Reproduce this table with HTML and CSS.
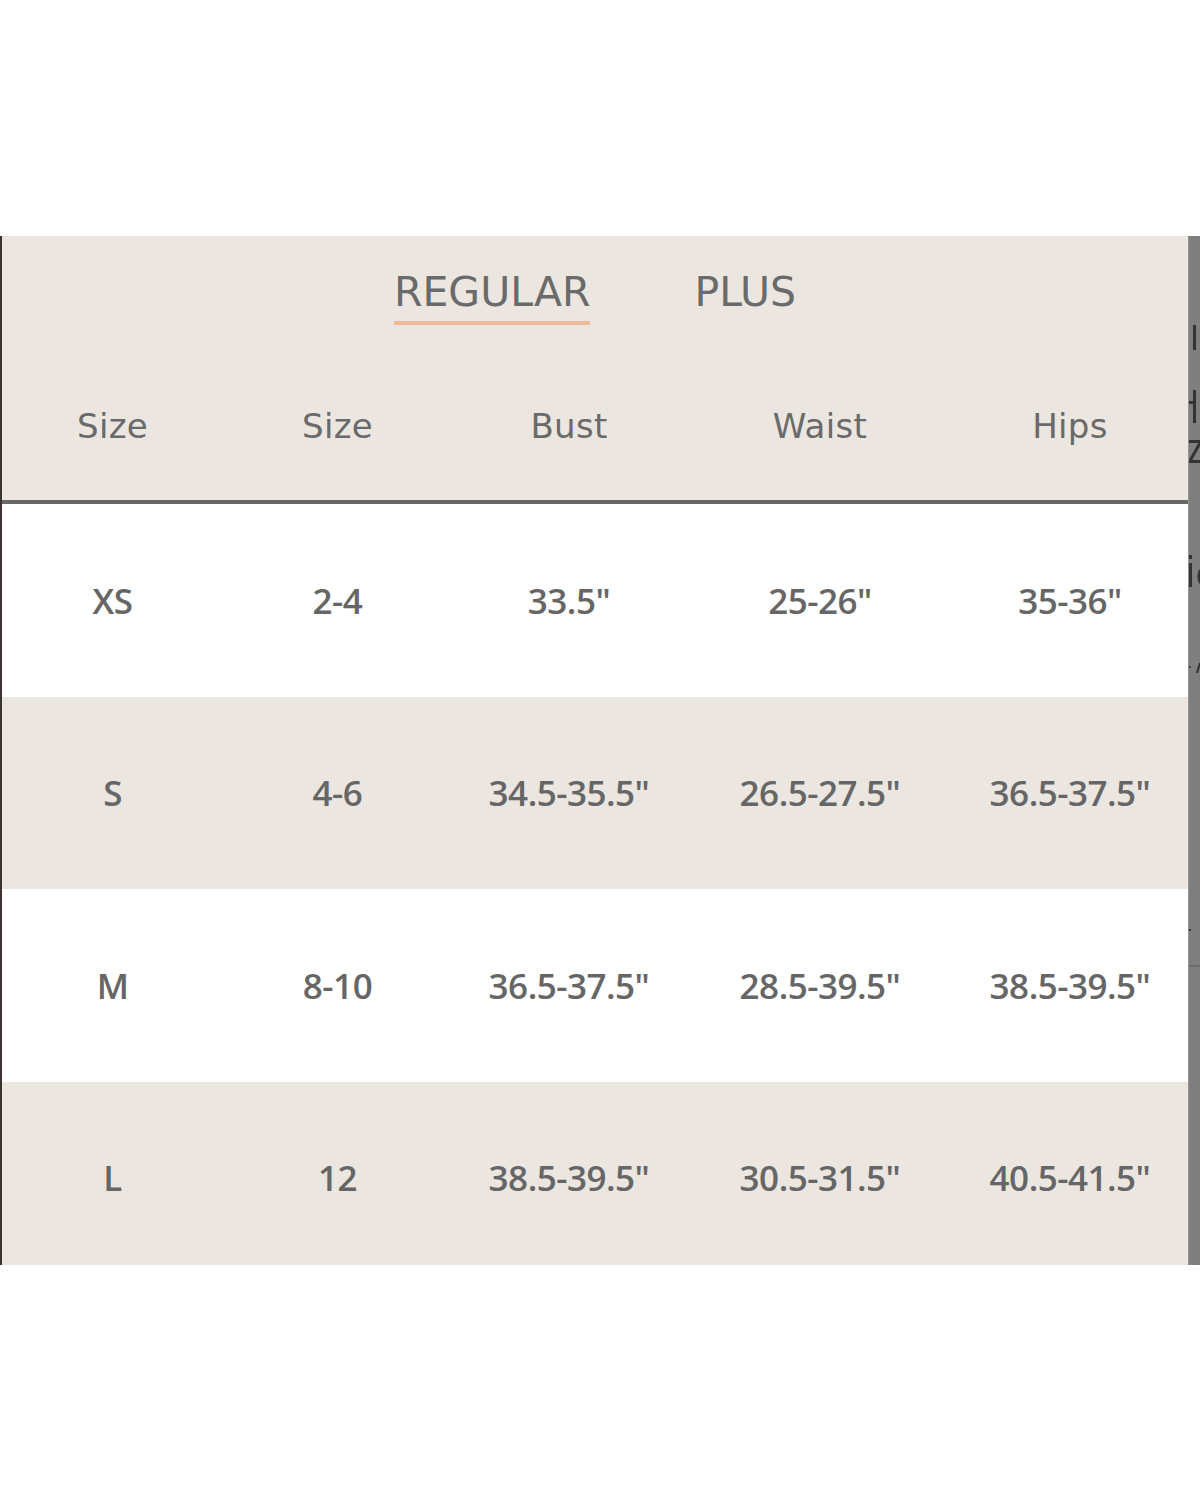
FILE: index.html
```html
<!DOCTYPE html>
<html lang="en">
<head>
<meta charset="utf-8">
<title>Size Chart</title>
<link rel="stylesheet" href="styles.css">
</head>
<body>
<div class="page">
  <div class="frame">
    <div class="panel">
      <div class="tabs">
        <span class="tab active">REGULAR</span>
        <span class="tab">PLUS</span>
      </div>
      <div class="table">
        <div class="row head">
          <div class="cell">Size</div>
          <div class="cell">Size</div>
          <div class="cell">Bust</div>
          <div class="cell">Waist</div>
          <div class="cell">Hips</div>
        </div>
        <div class="row">
          <div class="cell">XS</div>
          <div class="cell">2-4</div>
          <div class="cell">33.5"</div>
          <div class="cell">25-26"</div>
          <div class="cell">35-36"</div>
        </div>
        <div class="row alt">
          <div class="cell">S</div>
          <div class="cell">4-6</div>
          <div class="cell">34.5-35.5"</div>
          <div class="cell">26.5-27.5"</div>
          <div class="cell">36.5-37.5"</div>
        </div>
        <div class="row">
          <div class="cell">M</div>
          <div class="cell">8-10</div>
          <div class="cell">36.5-37.5"</div>
          <div class="cell">28.5-39.5"</div>
          <div class="cell">38.5-39.5"</div>
        </div>
        <div class="row alt">
          <div class="cell">L</div>
          <div class="cell">12</div>
          <div class="cell">38.5-39.5"</div>
          <div class="cell">30.5-31.5"</div>
          <div class="cell">40.5-41.5"</div>
        </div>
      </div>
    </div>
    <div class="strip">
      <svg class="strip-art" width="11" height="1029" viewBox="0 0 11 1029" aria-hidden="true">
        <g fill="#333333">
          <rect x="4" y="89" width="3" height="25"/>
          <rect x="0" y="165" width="5" height="3"/>
          <rect x="4" y="154" width="3" height="33"/>
          <rect x="0" y="204" width="11" height="3"/>
          <rect x="0" y="224" width="11" height="3"/>
          <rect x="0" y="319" width="3" height="4"/>
          <rect x="0" y="327" width="3" height="24"/>
          <rect x="0" y="430" width="1.5" height="2"/>
          <rect x="0" y="693" width="2" height="2"/>
        </g>
        <path d="M11 207 L1.5 224" stroke="#333333" stroke-width="3" fill="none"/>
        <path d="M11.5 334 Q8.5 340.5 11.5 347" stroke="#333333" stroke-width="3" fill="none"/>
        <path d="M11 427 L8 437" stroke="#333333" stroke-width="2" fill="none"/>
        <rect x="0" y="729" width="11" height="2" fill="#6b6b6b"/>
      </svg>
    </div>
  </div>
</div>
</body>
</html>
```

FILE: styles.css
```css
html, body {
  margin: 0;
  padding: 0;
  background: #ffffff;
}

.page {
  padding-top: 236px;
  font-family: "DejaVu Sans", "Liberation Sans", sans-serif;
  color: #686868;
}

.frame {
  display: flex;
  height: 1029px;
}

.panel {
  width: 1188px;
  background: #ebe6e0;
  border-left: 2px solid #3b3330;
  box-sizing: border-box;
  overflow: hidden;
}

.tabs {
  display: flex;
  justify-content: center;
  gap: 104px;
  padding-top: 31px;
  height: 116px;
  box-sizing: border-box;
}

.tab {
  font-family: "DejaVu Sans", sans-serif;
  font-size: 41px;
  font-weight: 400;
  line-height: 50px;
  height: 54px;
  color: #6a6a6a;
}

.tab.active {
  border-bottom: 4px solid #efb99a;
}

.table {
  margin-left: -2px;
}

.row {
  display: grid;
  grid-template-columns: 225px 225px 238px 264px 236px;
  height: 192.5px;
  align-items: center;
  background: #ffffff;
}

.row.alt {
  background: #ebe6e0;
}

.row.head {
  background: #ebe6e0;
  height: 148px;
  border-bottom: 4px solid #676767;
}

.cell {
  text-align: center;
  font-family: "Open Sans", "DejaVu Sans", sans-serif;
  font-size: 35px;
  font-weight: 600;
  letter-spacing: -0.5px;
  color: #666666;
}

.head .cell {
  font-family: "DejaVu Sans", sans-serif;
  font-size: 34px;
  font-weight: 400;
  letter-spacing: 0.3px;
  color: #6a6a6a;
}

.strip {
  width: 12px;
  background: #7f7f7f;
  border-left: 1px solid #959595;
  box-sizing: border-box;
  overflow: hidden;
}

.strip-art {
  display: block;
}
```
